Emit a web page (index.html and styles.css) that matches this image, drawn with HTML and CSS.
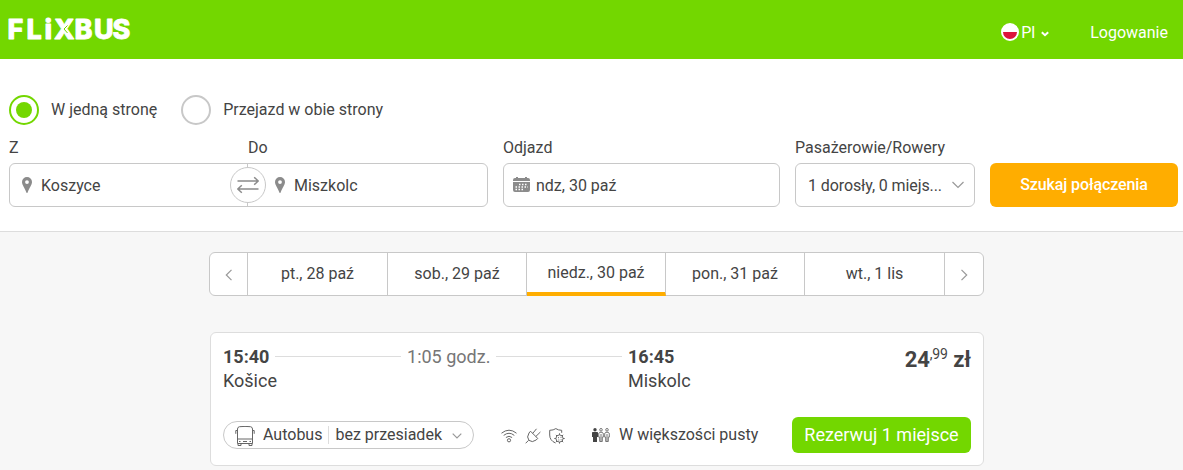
FILE: index.html
```html
<!DOCTYPE html>
<html lang="pl">
  <head>
    <meta charset="UTF-8" />
    <meta name="viewport" content="width=device-width, initial-scale=1.0" />
    <title>FlixBus</title>
    <link rel="stylesheet" href="styles.css" />
  </head>
  <body>
    <header class="header">
      <a class="logo" href="#">
        <svg width="140" height="44" viewBox="0 0 140 44">
          <text class="logo-text" x="-.5 18.500 36.500 46 66.500 86 104.500" y="31">FLiXBUS</text>
          <path class="logo-cut" d="M59.500 17.500l-3.500 3.500 3.500 4" />
        </svg>
      </a>
      <nav class="nav">
        <a class="lang" href="#">
          <span class="flag"></span>
          <span>Pl</span>
          <svg class="lang-arrow" width="8" height="6" viewBox="0 0 8 6"><path d="M.8 1.200l3.200 3 3.200-3" /></svg>
        </a>
        <a class="login" href="#">Logowanie</a>
      </nav>
    </header>

    <form class="search">
      <div class="trip-type">
        <label class="radio"><span class="radio-circle checked"></span>W jedną stronę</label>
        <label class="radio"><span class="radio-circle"></span>Przejazd w obie strony</label>
      </div>
      <div class="fields">
        <div class="route">
          <div class="labels">
            <span class="label-from">Z</span>
            <span>Do</span>
          </div>
          <div class="input route-input">
            <div class="from">
              <svg class="pin" width="10" height="16" viewBox="0 0 10 16"><path fill-rule="evenodd" d="M5 0a5 5 0 0 1 5 5c0 3-2.600 5.500-4.400 10.500q-.6 1-1.200 0C2.600 10.500 0 8 0 5a5 5 0 0 1 5-5zm0 3.200a1.900 1.900 0 1 0 0 3.800 1.900 1.900 0 0 0 0-3.800z" /></svg>
              <span>Koszyce</span>
            </div>
            <div class="to">
              <svg class="pin" width="10" height="16" viewBox="0 0 10 16"><path fill-rule="evenodd" d="M5 0a5 5 0 0 1 5 5c0 3-2.600 5.500-4.400 10.500q-.6 1-1.200 0C2.600 10.500 0 8 0 5a5 5 0 0 1 5-5zm0 3.200a1.900 1.900 0 1 0 0 3.800 1.900 1.900 0 0 0 0-3.800z" /></svg>
              <span>Miszkolc</span>
            </div>
            <span class="swap">
              <svg width="22" height="18" viewBox="0 0 22 18"><path d="M.5 5h20.500M17.200 1.200l4 3.800-4 3.800M21.500 13H1M4.800 9.200L.8 13l4 3.800" /></svg>
            </span>
          </div>
        </div>
        <div class="date">
          <div class="labels">Odjazd</div>
          <div class="input date-input">
            <svg class="calendar" width="17" height="15" viewBox="0 0 17 15">
              <path class="calendar-body" d="M2 1h1V0h2v1h7V0h2v1h1q2 0 2 2v1H0V3q0-2 2-2zM0 5h17v8q0 2-2 2H2q-2 0-2-2z" />
              <path class="calendar-days" d="M6 7.500h9M2.500 10h12.500M2.500 12.500h8" />
            </svg>
            <span>ndz, 30 paź</span>
          </div>
        </div>
        <div class="passengers">
          <div class="labels">Pasażerowie/Rowery</div>
          <div class="input passengers-input">
            <span>1 dorosły, 0 miejs...</span>
            <svg class="chevron" width="12" height="8" viewBox="0 0 12 8"><path d="M.5 1L6 6.500 11.500 1" /></svg>
          </div>
        </div>
        <button class="search-button" type="button">Szukaj połączenia</button>
      </div>
    </form>

    <main class="results">
      <div class="days">
        <a class="day-arrow" href="#"><svg class="chevron" width="8" height="12" viewBox="0 0 8 12"><path d="M6.500 .8L1.300 6l5.200 5.200" /></svg></a>
        <a class="day" href="#">pt., 28 paź</a>
        <a class="day" href="#">sob., 29 paź</a>
        <a class="day active" href="#">niedz., 30 paź</a>
        <a class="day" href="#">pon., 31 paź</a>
        <a class="day" href="#">wt., 1 lis</a>
        <a class="day-arrow" href="#"><svg class="chevron" width="8" height="12" viewBox="0 0 8 12"><path d="M1.500 .8L6.700 6l-5.200 5.200" /></svg></a>
      </div>

      <div class="ride">
        <div class="ride-top">
          <div class="times">
            <div class="time-row">
              <b>15:40</b>
              <span class="line"></span>
              <span class="duration">1:05 godz.</span>
              <span class="line"></span>
            </div>
            <div>Košice</div>
          </div>
          <div class="arrival">
            <b>16:45</b>
            <div>Miskolc</div>
          </div>
          <div class="price">24<sup>,99</sup> zł</div>
        </div>
        <div class="ride-bottom">
          <div class="transfer">
            <svg class="icon bus" width="20" height="20" viewBox="0 0 20 20">
              <path d="M2.500 13V3q0-2 2-2.300 5.500-.6 11 0 2 .3 2 2.300v14.500h-15V13h15M2.500 4.500H.8v3.300M17.500 4.500h1.700v3.300M3 17.500v2h3v-2M14 17.500v2h3v-2M4 15.500h1.500M14.500 15.500H16M8 15.500h4" />
            </svg>
            <span class="vehicle">Autobus</span>
            <span class="changes">bez przesiadek</span>
            <svg class="chevron" width="10" height="6" viewBox="0 0 10 6"><path d="M.7 .7L5 5l4.300-4.300" /></svg>
          </div>
          <div class="amenities">
            <svg class="icon" width="16" height="16" viewBox="0 0 16 16">
              <path d="M.5 5.200q7.500-6 15 0M2.700 7.400q5.300-4.300 10.600 0M4.900 9.500q3.100-2.500 6.200 0" />
              <circle cx="8" cy="12.300" r="1.600" />
            </svg>
            <svg class="icon" width="16" height="16" viewBox="0 0 16 16">
              <path d="M.6 15.300l3-3M5.500 3.200l7.200 7.200-1.500 1.600q-4 3-7.200.4-2.800-3.200 0-7.400zM7.700 5.400L11.500 .8M10.800 8.500L15.400 4" />
            </svg>
            <svg class="icon" width="16" height="16" viewBox="0 0 16 16">
              <path d="M6.500 15Q.7 12.500 .7 7V2.300Q4.500 2.300 6.800 .6q2.500 1.700 5.900 1.700v2.500" />
              <circle cx="10.500" cy="10.500" r="3.600" />
              <path d="M10.500 5.300v1.600M10.500 14v1.600M5.300 10.500h1.600M14 10.500h1.700M6.900 6.900L8 8M13 13l1.200 1.200M14.200 6.900L13 8M6.900 14.200L8 13M9 9.700h1M11.500 9.300h1M9.300 12h1M11.700 11.700h.8" />
            </svg>
          </div>
          <svg class="people" width="18" height="14" viewBox="0 0 18 14">
            <circle class="person-full" cx="3" cy="1.700" r="1.700" />
            <path class="person-full" d="M.8 4h4.400q.8 0 .8.800v4.200H5v5H1V9H0V4.800Q0 4 .8 4z" />
            <circle cx="9" cy="1.800" r="1.300" />
            <path d="M7.700 4.300h2.600q1 .5 1 1.800v3h-1v4.400H7.700V9.100h-1v-3q0-1.300 1-1.800zM9 6v7" />
            <circle cx="15" cy="1.800" r="1.300" />
            <path d="M13.700 4.300h2.600q1 .5 1 1.800v3h-1v4.400h-2.600V9.100h-1v-3q0-1.300 1-1.800zM15 6v7" />
          </svg>
          <span class="seats">W większości pusty</span>
          <button class="book-button" type="button">Rezerwuj 1 miejsce</button>
        </div>
      </div>
    </main>
  </body>
</html>
```

FILE: styles.css
```css
* {
  box-sizing: border-box;
}
body {
  margin: 0;
  height: 470px;
  overflow: hidden;
  font-family: Roboto, sans-serif;
  font-size: 16px;
  line-height: 24px;
  color: #444;
  background: #f7f7f7;
}
a {
  color: inherit;
  text-decoration: none;
}
svg {
  display: block;
  flex: none;
  fill: none;
}
button {
  padding: 0;
  border: none;
  border-radius: 6px;
  color: #fff;
  font-family: inherit;
}

/* header */
.header {
  display: flex;
  justify-content: space-between;
  height: 59px;
  padding: 8px 15px 0 8px;
  color: #fff;
  background: #73d700;
}
.logo svg {
  overflow: visible;
}
.logo-text {
  font-family: Inter, sans-serif;
  font-size: 27px;
  font-weight: 800;
  fill: #fff;
  stroke: #fff;
  stroke-width: 0.8;
  stroke-linejoin: round;
}
.logo-cut {
  stroke: #73d700;
  stroke-width: 1;
}
.nav {
  display: flex;
  gap: 41px;
  padding-top: 13px;
}
.lang {
  display: flex;
  align-items: center;
  height: 24px;
}
.flag {
  width: 18px;
  height: 18px;
  margin: -2px 2px 0 0;
  border: 2px solid #fff;
  border-radius: 50%;
  background: linear-gradient(#fff 50%, #dc143c 50%);
}
.lang-arrow {
  margin: 1px 0 0 6px;
  stroke: #fff;
  stroke-width: 2;
}

/* search form */
.search {
  height: 173px;
  padding: 36px 5px 0 9px;
  border-bottom: 1px solid #ddd;
  background: #fff;
}
.trip-type {
  display: flex;
  gap: 24px;
}
.radio {
  display: flex;
  align-items: center;
  height: 30px;
}
.radio-circle {
  display: flex;
  align-items: center;
  justify-content: center;
  width: 30px;
  height: 30px;
  margin-right: 12px;
  border: 2px solid #c8c8c8;
  border-radius: 50%;
}
.radio-circle.checked {
  border-color: #73d700;
}
.radio-circle.checked::after {
  content: "";
  width: 16px;
  height: 16px;
  border-radius: 50%;
  background: #73d700;
}
.fields {
  display: grid;
  grid-template-columns: 479px 277px 180px 188px;
  gap: 15px;
  align-items: end;
  margin-top: 11px;
}
.labels {
  display: flex;
  margin-bottom: 3px;
}
.label-from {
  width: 239px;
}
.input {
  display: flex;
  align-items: center;
  height: 44px;
  border: 1px solid #c8c8c8;
  border-radius: 6px;
}
.input > span:not(.swap),
.from span,
.to span {
  padding-top: 2px;
}
.route-input {
  position: relative;
}
.from,
.to {
  display: flex;
  align-items: center;
  gap: 9px;
  height: 100%;
}
.from {
  width: 238px;
  padding-left: 12px;
  border-right: 1px solid #c8c8c8;
}
.to {
  padding-left: 27px;
}
.pin {
  fill: #8b8b8b;
}
.swap {
  position: absolute;
  top: 3px;
  left: 220px;
  display: flex;
  align-items: center;
  justify-content: center;
  width: 36px;
  height: 36px;
  border: 1px solid #c8c8c8;
  border-radius: 50%;
  background: #fff;
}
.swap svg {
  stroke: #8b8b8b;
  stroke-width: 1.5;
}
.date-input {
  gap: 6px;
  padding-left: 9px;
}
.calendar {
  margin-top: -1px;
}
.calendar-body {
  fill: #8b8b8b;
}
.calendar-days {
  stroke: #fff;
  stroke-width: 1.3;
  stroke-dasharray: 1.5 1.5;
}
.passengers-input {
  justify-content: space-between;
  padding: 0 10px 0 12px;
}
.passengers-input span {
  letter-spacing: -0.1px;
}
.passengers-input .chevron {
  margin-top: -1px;
}
.chevron {
  stroke: #999;
  stroke-width: 1.2;
}
.search-button {
  height: 44px;
  padding-bottom: 2px;
  font-size: 16px;
  font-weight: 500;
  letter-spacing: -0.1px;
  background: #ffad00;
}

/* day tabs */
.results {
  width: 775px;
  margin: 20px 0 0 209px;
}
.days {
  display: grid;
  grid-template-columns: 38px 140px 139px 139px 139px 140px 38px;
  height: 44px;
  border: 1px solid #c8c8c8;
  border-radius: 6px;
  background: #fff;
}
.day,
.day-arrow {
  display: flex;
  align-items: center;
  justify-content: center;
  border-right: 1px solid #c8c8c8;
}
.day-arrow:last-child {
  border-right: none;
}
.day-arrow .chevron {
  margin-top: 2px;
}
.day.active {
  margin-bottom: -1px;
  border-bottom: 4px solid #ffad00;
}

/* ride card */
.ride {
  height: 134px;
  margin: 36px 0 0 1px;
  padding: 12px 12px 0;
  border: 1px solid #ddd;
  border-radius: 6px;
  background: #fff;
}
.ride-top {
  display: flex;
  height: 72px;
  font-size: 18px;
}
.times {
  width: 399px;
  margin-right: 6px;
}
.time-row {
  display: flex;
  align-items: center;
  gap: 6px;
}
.line {
  flex: 1;
  height: 1px;
  margin-top: -1px;
  background: #ddd;
}
.duration {
  color: #767676;
}
.price {
  margin: 3px 0 0 auto;
  font-size: 22px;
  font-weight: 700;
  letter-spacing: -0.1px;
}
.price sup {
  font-size: 14px;
  font-weight: 400;
  line-height: 0;
}
.ride-bottom {
  display: flex;
  align-items: center;
  height: 36px;
}
.transfer {
  display: flex;
  align-items: center;
  width: 251px;
  height: 28px;
  padding-left: 11px;
  border: 1px solid #c8c8c8;
  border-radius: 14px;
}
.icon {
  stroke: #666;
  stroke-width: 1;
}
.bus {
  margin-top: 2px;
}
.vehicle {
  margin-left: 8px;
}
.changes {
  height: 18px;
  margin: 0 11px 0 6px;
  padding-left: 6px;
  border-left: 1px solid #ddd;
  line-height: 18px;
}
.transfer .chevron {
  margin: 2px 0 0 -1px;
}
.amenities {
  display: flex;
  gap: 8px;
  margin: 2px 0 0 27px;
}
.people {
  margin-left: 27px;
  stroke: #666;
  stroke-width: 0.9;
}
.person-full {
  fill: #444;
  stroke: none;
}
.seats {
  margin-left: 9px;
}
.book-button {
  width: 179px;
  height: 36px;
  margin-left: auto;
  padding-bottom: 1px;
  font-size: 18px;
  font-weight: 400;
  background: #73d700;
}
```
